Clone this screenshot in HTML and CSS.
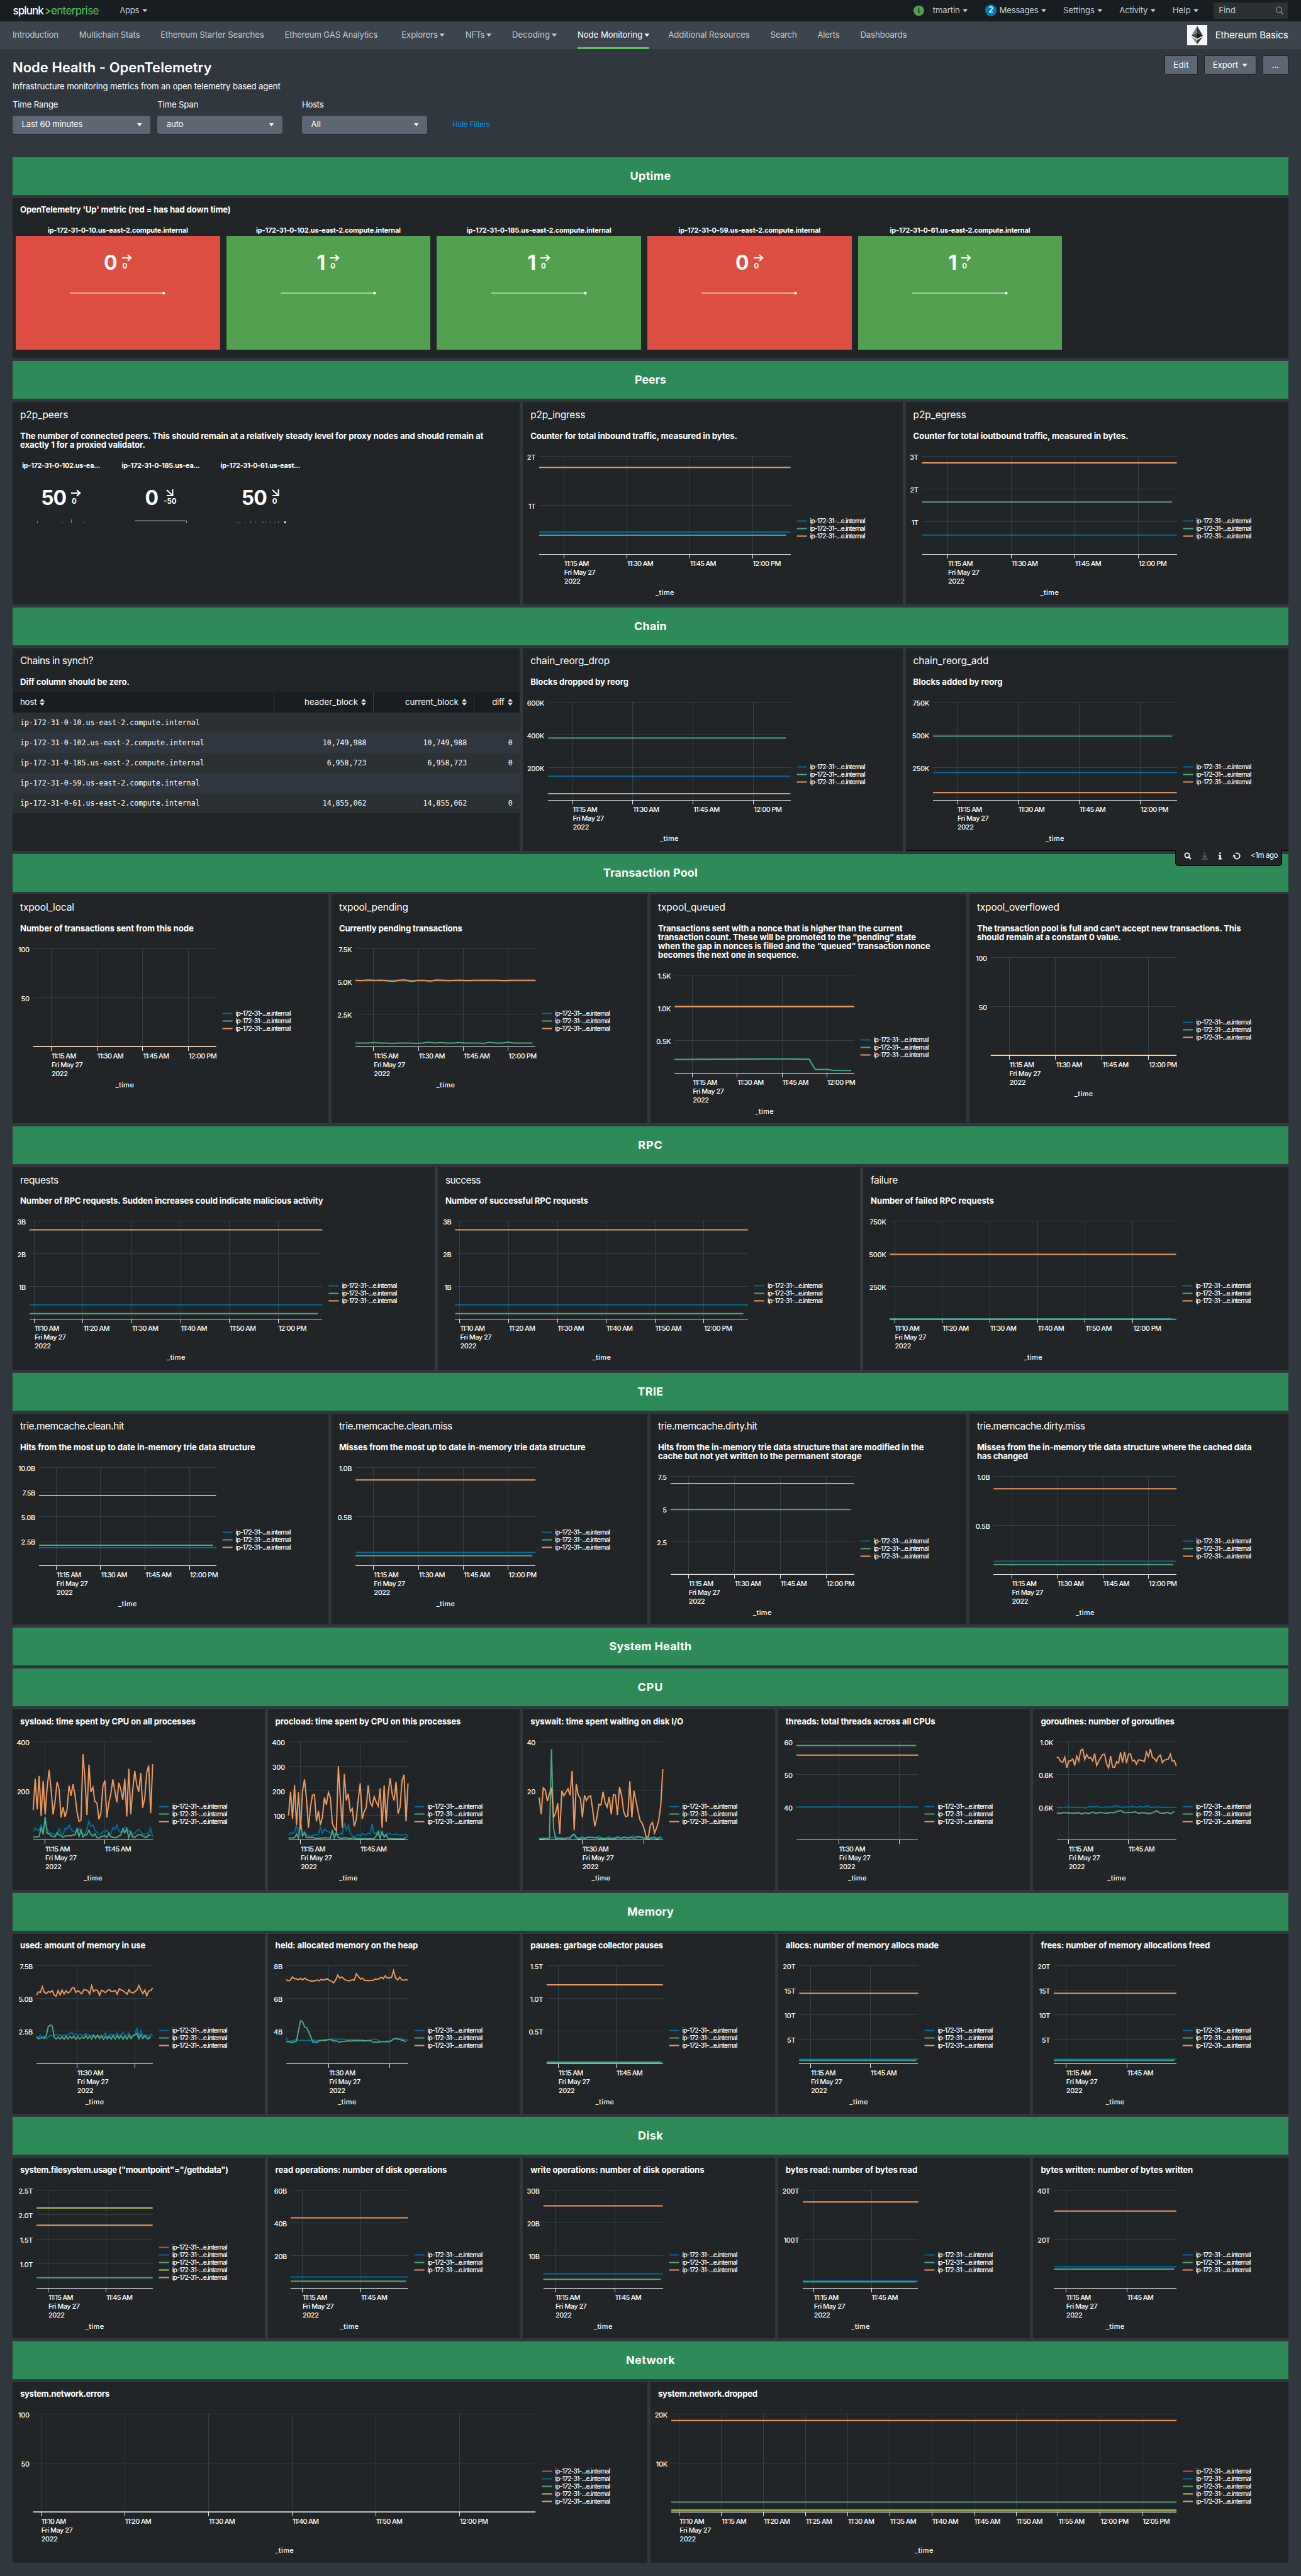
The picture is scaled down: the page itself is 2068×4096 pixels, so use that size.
FILE: index.html
```html
<!DOCTYPE html>
<html lang="en">
<head>
<meta charset="utf-8">
<title>Node Health - OpenTelemetry</title>
<link rel="stylesheet" href="styles.css">
</head>
<body>
<header class="topbar">
  <div class="logo"><span class="logo-name" data-w="48.5">splunk</span><svg class="logo-mark" width="8" height="12" viewBox="0 0 8 12"><path d="M1 1.5 L7 5.6 L1 10" fill="none" stroke="#5cc05c" stroke-width="1.8"/></svg><span class="logo-kind" data-w="76">enterprise</span></div>
  <div class="apps"><span data-w="31">Apps</span><i class="caret"></i></div>
  <div class="account">
    <span class="status">i</span>
    <span class="menu user"><span data-w="43">tmartin</span><i class="caret"></i></span>
    <span class="menu messages"><b class="count">2</b><span data-w="62">Messages</span><i class="caret"></i></span>
    <span class="menu"><span data-w="50">Settings</span><i class="caret"></i></span>
    <span class="menu"><span data-w="45">Activity</span><i class="caret"></i></span>
    <span class="menu"><span data-w="29">Help</span><i class="caret"></i></span>
    <span class="find"><span data-w="27">Find</span><svg width="14" height="14" viewBox="0 0 14 14"><circle cx="6" cy="5.5" r="4.3" fill="none" stroke="#6b7785" stroke-width="1.8"/><path d="M9 9 L12.5 12.5" stroke="#6b7785" stroke-width="2.4"/></svg></span>
  </div>
</header>
<nav class="nav">
  <div class="links">
    <span data-w="73">Introduction</span>
    <span data-w="96.5">Multichain Stats</span>
    <span data-w="164.5">Ethereum Starter Searches</span>
    <span data-w="148">Ethereum GAS Analytics</span>
    <span class="drop explorers"><span data-w="57.5">Explorers</span><i class="caret"></i></span>
    <span class="drop"><span data-w="30.5">NFTs</span><i class="caret"></i></span>
    <span class="drop"><span data-w="60">Decoding</span><i class="caret"></i></span>
    <span class="drop active"><span data-w="103.5">Node Monitoring</span><i class="caret"></i></span>
    <span class="after-active" data-w="129.5">Additional Resources</span>
    <span data-w="42">Search</span>
    <span data-w="35">Alerts</span>
    <span data-w="74">Dashboards</span>
  </div>
  <div class="app-brand">
    <svg width="32" height="32" viewBox="0 0 32 32"><rect width="32" height="32" fill="#f6f7fa"/><path d="M16 1.5 L7 16.5 L16 12.5Z" fill="#77797c"/><path d="M16 1.5 L25 16.5 L16 12.5Z" fill="#3a3c3f"/><path d="M7 16.5 L16 12.5 V21.5Z" fill="#3f4144"/><path d="M25 16.5 L16 12.5 V21.5Z" fill="#131415"/><path d="M7 18.5 L16 23.5 V30.5Z" fill="#828487"/><path d="M25 18.5 L16 23.5 V30.5Z" fill="#3a3c3f"/></svg>
    <span data-w="116">Ethereum Basics</span>
  </div>
</nav>
<main>
  <div class="page-head">
    <div>
      <h1><span data-w="317">Node Health - OpenTelemetry</span></h1>
      <p class="subtitle"><span data-w="426">Infrastructure monitoring metrics from an open telemetry based agent</span></p>
    </div>
    <div class="actions">
      <span class="btn edit"><span data-w="24.5">Edit</span></span>
      <span class="btn export"><span data-w="40.5">Export</span><i class="caret"></i></span>
      <span class="btn more"><span data-w="11">...</span></span>
    </div>
  </div>
  <div class="filters">
    <div class="field range"><label data-w="72.5">Time Range</label><div class="select"><span data-w="97">Last 60 minutes</span><i class="caret"></i></div></div>
    <div class="field span"><label data-w="65">Time Span</label><div class="select"><span data-w="27">auto</span><i class="caret"></i></div></div>
    <div class="field hosts"><label data-w="34.5">Hosts</label><div class="select"><span data-w="15.5">All</span><i class="caret"></i></div></div>
    <span class="hide"><span data-w="59.5">Hide Filters</span></span>
  </div>

  <h2 class="bar"><span data-w="65">Uptime</span></h2>
  <section class="row uptime">
    <div class="panel">
      <p class="desc"><span data-w="335">OpenTelemetry 'Up' metric (red = has had down time)</span></p>
      <div class="tiles">
        <div class="tile down"><h4><span data-w="223">ip-172-31-0-10.us-east-2.compute.internal</span></h4><div class="tile-body"><div class="value"><b>0</b><span class="trend"><svg width="16" height="12"><use href="#flat"/></svg><small>0</small></span></div><svg class="spark" width="152" height="6"><use href="#line"/></svg></div></div>
        <div class="tile up"><h4><span data-w="230">ip-172-31-0-102.us-east-2.compute.internal</span></h4><div class="tile-body"><div class="value"><b>1</b><span class="trend"><svg width="16" height="12"><use href="#flat"/></svg><small>0</small></span></div><svg class="spark" width="152" height="6"><use href="#line"/></svg></div></div>
        <div class="tile up"><h4><span data-w="230">ip-172-31-0-185.us-east-2.compute.internal</span></h4><div class="tile-body"><div class="value"><b>1</b><span class="trend"><svg width="16" height="12"><use href="#flat"/></svg><small>0</small></span></div><svg class="spark" width="152" height="6"><use href="#line"/></svg></div></div>
        <div class="tile down"><h4><span data-w="226">ip-172-31-0-59.us-east-2.compute.internal</span></h4><div class="tile-body"><div class="value"><b>0</b><span class="trend"><svg width="16" height="12"><use href="#flat"/></svg><small>0</small></span></div><svg class="spark" width="152" height="6"><use href="#line"/></svg></div></div>
        <div class="tile up"><h4><span data-w="223">ip-172-31-0-61.us-east-2.compute.internal</span></h4><div class="tile-body"><div class="value"><b>1</b><span class="trend"><svg width="16" height="12"><use href="#flat"/></svg><small>0</small></span></div><svg class="spark" width="152" height="6"><use href="#line"/></svg></div></div>
      </div>
    </div>
  </section>

  <h2 class="bar"><span data-w="50">Peers</span></h2>
  <section class="row wide-first">
    <div class="panel">
      <h3><span data-w="76.5">p2p_peers</span></h3>
      <p class="desc"><span data-w="737">The number of connected peers. This should remain at a relatively steady level for proxy nodes and should remain at</span><br><span data-w="199">exactly 1 for a proxied validator.</span></p>
      <div class="peers">
        <div class="peer"><h4><span data-w="124">ip-172-31-0-102.us-ea...</span></h4><div class="value"><b>50</b><span class="trend"><svg width="16" height="12"><use href="#flat"/></svg><small>0</small></span></div><svg class="spark" width="84" height="6"><path d="M4.5 3V6M44 4V6M58.500 0V6M78 4V6" stroke="#8d9093"/></svg></div>
        <div class="peer"><h4><span data-w="124">ip-172-31-0-185.us-ea...</span></h4><div class="value"><b>0</b><span class="trend mid"><svg width="12" height="12"><use href="#fall"/></svg><small>-50</small></span></div><svg class="spark" width="84" height="6"><path d="M0 2H82.500V6" fill="none" stroke="#a0a3a5"/></svg></div>
        <div class="peer"><h4><span data-w="126.5">ip-172-31-0-61.us-east...</span></h4><div class="value"><b>50</b><span class="trend"><svg width="12" height="12"><use href="#fall"/></svg><small>0</small></span></div><svg class="spark" width="84" height="6"><path d="M4 4V6M8 4V6M18 4V6M27 2V6M34 3V6M46 3V6M50 4V6M58 3V6M65 4V6M71 2V6" stroke="#7c8083"/><path d="M80 3h2.500V6h-2.500z" fill="#fff"/></svg></div>
      </div>
    </div>
    <div class="panel"><h3><span data-w="87">p2p_ingress</span></h3><p class="desc"><span data-w="329">Counter for total inbound traffic, measured in bytes.</span></p><svg class="chart" data-chart="ingress"></svg></div>
    <div class="panel"><h3><span data-w="84">p2p_egress</span></h3><p class="desc"><span data-w="342">Counter for total ioutbound traffic, measured in bytes.</span></p><svg class="chart" data-chart="egress"></svg></div>
  </section>

  <h2 class="bar"><span data-w="52">Chain</span></h2>
  <section class="row wide-first">
    <div class="panel">
      <h3><span data-w="116">Chains in synch?</span></h3>
      <p class="desc"><span data-w="174">Diff column should be zero.</span></p>
      <table>
        <colgroup><col class="c-host"><col class="c-head"><col class="c-cur"><col></colgroup>
        <thead><tr>
          <th><span data-w="26.5">host</span><svg class="sort" width="8" height="11"><use href="#sort"/></svg></th>
          <th><span data-w="85">header_block</span><svg class="sort" width="8" height="11"><use href="#sort"/></svg></th>
          <th><span data-w="85">current_block</span><svg class="sort" width="8" height="11"><use href="#sort"/></svg></th>
          <th><span data-w="19.5">diff</span><svg class="sort" width="8" height="11"><use href="#sort"/></svg></th>
        </tr></thead>
        <tbody>
          <tr><td>ip-172-31-0-10.us-east-2.compute.internal</td><td></td><td></td><td></td></tr>
          <tr><td>ip-172-31-0-102.us-east-2.compute.internal</td><td>10,749,988</td><td>10,749,988</td><td>0</td></tr>
          <tr><td>ip-172-31-0-185.us-east-2.compute.internal</td><td>6,958,723</td><td>6,958,723</td><td>0</td></tr>
          <tr><td>ip-172-31-0-59.us-east-2.compute.internal</td><td></td><td></td><td></td></tr>
          <tr><td>ip-172-31-0-61.us-east-2.compute.internal</td><td>14,855,062</td><td>14,855,062</td><td>0</td></tr>
        </tbody>
      </table>
    </div>
    <div class="panel"><h3><span data-w="126">chain_reorg_drop</span></h3><p class="desc"><span data-w="156">Blocks dropped by reorg</span></p><svg class="chart" data-chart="reorgDrop"></svg></div>
    <div class="panel hovered"><h3><span data-w="120">chain_reorg_add</span></h3><p class="desc"><span data-w="142">Blocks added by reorg</span></p><svg class="chart" data-chart="reorgAdd"></svg>
      <div class="tools">
        <svg width="12" height="12" viewBox="0 0 12 12"><circle cx="5" cy="5" r="3.6" fill="none" stroke="#fff" stroke-width="1.8"/><path d="M7.600 7.600 L11 11" stroke="#fff" stroke-width="2.200"/></svg>
        <svg width="10" height="12" viewBox="0 0 10 12"><path d="M5 0V8M2 5.500L5 8.500L8 5.500M0 11H10" fill="none" stroke="#5c6773" stroke-width="1.400"/></svg>
        <svg width="7" height="12" viewBox="0 0 7 12"><path d="M2.200 0.500h2.600v2.200H2.200zM0.800 4.300h4V9.800h1.400V11.500H.8V9.800h1.400V6H.8z" fill="#fff"/></svg>
        <svg width="13" height="12" viewBox="0 0 13 12"><path d="M2.600 6.500A4.600 4.600 0 1 0 5 2" fill="none" stroke="#fff" stroke-width="1.700"/><path d="M0 6.800H5.400L2.700 3.600z" fill="#fff"/></svg>
        <span data-w="43">&lt;1m ago</span>
      </div>
    </div>
  </section>

  <h2 class="bar"><span data-w="150.5">Transaction Pool</span></h2>
  <section class="row quarters txpool">
    <div class="panel"><h3><span data-w="86">txpool_local</span></h3><p class="desc"><span data-w="276">Number of transactions sent from this node</span></p><svg class="chart" data-chart="txLocal"></svg></div>
    <div class="panel"><h3><span data-w="110">txpool_pending</span></h3><p class="desc"><span data-w="196">Currently pending transactions</span></p><svg class="chart" data-chart="txPending"></svg></div>
    <div class="panel"><h3><span data-w="107">txpool_queued</span></h3><p class="desc"><span data-w="389">Transactions sent with a nonce that is higher than the current</span><br><span data-w="410.5">transaction count. These will be promoted to the “pending” state</span><br><span data-w="433">when the gap in nonces is filled and the “queued” transaction nonce</span><br><span data-w="224">becomes the next one in sequence.</span></p><svg class="chart" data-chart="txQueued"></svg></div>
    <div class="panel"><h3><span data-w="131">txpool_overflowed</span></h3><p class="desc"><span data-w="420">The transaction pool is full and can't accept new transactions. This</span><br><span data-w="229">should remain at a constant 0 value.</span></p><svg class="chart" data-chart="txOver"></svg></div>
  </section>

  <h2 class="bar"><span data-w="39.5">RPC</span></h2>
  <section class="row thirds">
    <div class="panel"><h3><span data-w="61">requests</span></h3><p class="desc"><span data-w="482">Number of RPC requests. Sudden increases could indicate malicious activity</span></p><svg class="chart" data-chart="rpcRequests"></svg></div>
    <div class="panel"><h3><span data-w="56">success</span></h3><p class="desc"><span data-w="227">Number of successful RPC requests</span></p><svg class="chart" data-chart="rpcSuccess"></svg></div>
    <div class="panel"><h3><span data-w="43">failure</span></h3><p class="desc"><span data-w="196">Number of failed RPC requests</span></p><svg class="chart" data-chart="rpcFailure"></svg></div>
  </section>

  <h2 class="bar"><span data-w="41">TRIE</span></h2>
  <section class="row quarters trie">
    <div class="panel"><h3><span data-w="165">trie.memcache.clean.hit</span></h3><p class="desc"><span data-w="374">Hits from the most up to date in-memory trie data structure</span></p><svg class="chart" data-chart="cleanHit"></svg></div>
    <div class="panel"><h3><span data-w="180">trie.memcache.clean.miss</span></h3><p class="desc"><span data-w="392">Misses from the most up to date in-memory trie data structure</span></p><svg class="chart" data-chart="cleanMiss"></svg></div>
    <div class="panel"><h3><span data-w="157.5">trie.memcache.dirty.hit</span></h3><p class="desc"><span data-w="423">Hits from the in-memory trie data structure that are modified in the</span><br><span data-w="324">cache but not yet written to the permanent storage</span></p><svg class="chart" data-chart="dirtyHit"></svg></div>
    <div class="panel"><h3><span data-w="171.5">trie.memcache.dirty.miss</span></h3><p class="desc"><span data-w="437">Misses from the in-memory trie data structure where the cached data</span><br><span data-w="81">has changed</span></p><svg class="chart" data-chart="dirtyMiss"></svg></div>
  </section>

  <h2 class="bar"><span data-w="131">System Health</span></h2>
  <h2 class="bar"><span data-w="41">CPU</span></h2>
  <section class="row fifths">
    <div class="panel"><p class="desc"><span data-w="279">sysload: time spent by CPU on all processes</span></p><svg class="chart" data-chart="sysload"></svg></div>
    <div class="panel"><p class="desc"><span data-w="295">procload: time spent by CPU on this processes</span></p><svg class="chart" data-chart="procload"></svg></div>
    <div class="panel"><p class="desc"><span data-w="243">syswait: time spent waiting on disk I/O</span></p><svg class="chart" data-chart="syswait"></svg></div>
    <div class="panel"><p class="desc"><span data-w="238">threads: total threads across all CPUs</span></p><svg class="chart" data-chart="threads"></svg></div>
    <div class="panel"><p class="desc"><span data-w="212.5">goroutines: number of goroutines</span></p><svg class="chart" data-chart="goroutines"></svg></div>
  </section>

  <h2 class="bar"><span data-w="74">Memory</span></h2>
  <section class="row fifths">
    <div class="panel"><p class="desc"><span data-w="199.5">used: amount of memory in use</span></p><svg class="chart" data-chart="used"></svg></div>
    <div class="panel"><p class="desc"><span data-w="227">held: allocated memory on the heap</span></p><svg class="chart" data-chart="held"></svg></div>
    <div class="panel"><p class="desc"><span data-w="211">pauses: garbage collector pauses</span></p><svg class="chart" data-chart="pauses"></svg></div>
    <div class="panel"><p class="desc"><span data-w="243.500">allocs: number of memory allocs made</span></p><svg class="chart" data-chart="allocs"></svg></div>
    <div class="panel"><p class="desc"><span data-w="269">frees: number of memory allocations freed</span></p><svg class="chart" data-chart="frees"></svg></div>
  </section>

  <h2 class="bar"><span data-w="40">Disk</span></h2>
  <section class="row fifths">
    <div class="panel"><p class="desc"><span data-w="331">system.filesystem.usage ("mountpoint"="/gethdata")</span></p><svg class="chart" data-chart="fsUsage"></svg></div>
    <div class="panel"><p class="desc"><span data-w="273">read operations: number of disk operations</span></p><svg class="chart" data-chart="readOps"></svg></div>
    <div class="panel"><p class="desc"><span data-w="276.500">write operations: number of disk operations</span></p><svg class="chart" data-chart="writeOps"></svg></div>
    <div class="panel"><p class="desc"><span data-w="209.500">bytes read: number of bytes read</span></p><svg class="chart" data-chart="bytesRead"></svg></div>
    <div class="panel"><p class="desc"><span data-w="242">bytes written: number of bytes written</span></p><svg class="chart" data-chart="bytesWritten"></svg></div>
  </section>

  <h2 class="bar"><span data-w="78">Network</span></h2>
  <section class="row halves">
    <div class="panel"><p class="desc"><span data-w="142">system.network.errors</span></p><svg class="chart" data-chart="netErrors"></svg></div>
    <div class="panel"><p class="desc"><span data-w="158">system.network.dropped</span></p><svg class="chart" data-chart="netDropped"></svg></div>
  </section>
</main>
<svg class="defs" width="0" height="0">
  <defs>
    <g id="flat"><path d="M0 6H14M9 1.200L14.200 6L9 10.800" fill="none" stroke="#fff" stroke-width="2.200"/></g>
    <g id="fall"><path d="M1 1L10 9.600M10.500 0V10H1" fill="none" stroke="#fff" stroke-width="2"/></g>
    <g id="line"><path d="M0 3H149" stroke="#fff" stroke-opacity=".5" stroke-width="2"/><circle cx="149.500" cy="3" r="2.300" fill="#fff"/></g>
    <g id="sort"><path d="M0 4.500L4 0L8 4.500zM0 6.500H8L4 11z" fill="#e6e9ec"/></g>
  </defs>
</svg>
<script src="charts.js"></script>
</body>
</html>
```
FILE: styles.css
```css
* { box-sizing: border-box; }
html { background: #31373e; }
body {
  margin: 0;
  width: 2070px;
  zoom: 0.99903;
  background: #31373e;
  color: #fff;
  font: 13.2px/18px Inter, "Liberation Sans", sans-serif;
  white-space: nowrap;
}
h1, h2, h3, h4, p { margin: 0; }
[data-w] { display: inline-block; }
.defs { position: absolute; }
.caret { flex: none; width: 8px; height: 5px; background: currentColor; clip-path: polygon(0 0, 100% 0, 50% 100%); }

/* top bar */
.topbar { display: flex; align-items: center; height: 34px; padding: 0 21px 0 20.5px; background: #171d21; color: #c3cbd4; }
.logo { display: flex; align-items: center; width: 170px; font-size: 17px; }
.logo-name { color: #fff; font-weight: 500; }
.logo-mark { margin: 2px 1px 0 3px; }
.logo-kind { color: #5cc05c; }
.apps { display: flex; align-items: center; gap: 5px; }
.account { display: flex; align-items: center; margin-left: auto; }
.status { width: 16.5px; height: 16.5px; border-radius: 50%; background: #53a051; color: #171d21; font: bold 12px/16.5px "Liberation Serif", serif; text-align: center; }
.menu { display: flex; align-items: center; gap: 4.5px; margin-left: 27px; }
.user { margin-left: 14px; }
.messages { margin-left: 28px; }
.count { width: 18px; height: 19px; border-radius: 9px; background: #007abd; color: #fff; font-size: 12.5px; font-weight: 600; line-height: 19px; text-align: center; }
.find { display: flex; align-items: center; justify-content: space-between; width: 118px; height: 26px; margin-left: 24px; padding: 0 6px 0 8px; border-radius: 2px; background: #2b3033; }

/* app navigation */
.nav { display: flex; justify-content: space-between; height: 44px; padding: 0 20.5px 0 20px; background: #3c444d; color: #c3cbd4; }
.links { display: flex; gap: 33px; line-height: 44px; }
.drop { display: flex; align-items: center; gap: 3px; }
.explorers { margin-left: 5px; }
.active { box-shadow: inset 0 -3px #5cc05c; color: #fff; }
.after-active { margin-left: -3px; }
.app-brand { display: flex; align-items: center; gap: 12.5px; font-size: 15px; color: #fff; }

/* title and filters */
main { padding: 0 20px 20px; }
.page-head { display: flex; justify-content: space-between; height: 69.5px; }
h1 { padding-top: 14px; font-size: 22px; line-height: 32px; font-weight: 600; }
.subtitle { padding-top: 4.5px; line-height: 20px; }
.actions { display: flex; gap: 10px; margin-top: 10.5px; }
.btn { display: flex; align-items: center; justify-content: center; gap: 6.5px; height: 31px; border: 1px solid #1f2327; border-radius: 3px; background: #5c6773; }
.edit { width: 52.5px; }
.export { width: 83px; }
.more { width: 41.5px; }
.filters { display: flex; padding-top: 10.5px; height: 102.5px; }
.field label { height: 18px; }
.select { display: flex; align-items: center; justify-content: space-between; height: 29px; margin-top: 8px; padding: 0 13px 0 14.5px; border-radius: 3px; background: #5c6773; box-shadow: 0 1px 1px #1f2327; }
.range { width: 219px; }
.span { width: 198.5px; margin-left: 11.5px; }
.hosts { width: 199px; margin-left: 31.5px; }
.hide { margin: 32px 0 0 40.5px; font-size: 11.5px; color: #009ceb; }

/* section bars and panel rows */
.bar { height: 60px; margin-bottom: 5px; background: #2e8b57; font-size: 18px; line-height: 61px; font-weight: 700; text-align: center; }
.row { display: grid; height: 322px; margin-bottom: 5px; }
.row:last-child { margin-bottom: 0; }
.uptime { height: 255px; }
.txpool { height: 364px; }
.trie { height: 336px; }
.wide-first { grid-template-columns: 4fr 3fr 3fr; }
.quarters { grid-template-columns: repeat(4, 1fr); }
.thirds { grid-template-columns: repeat(3, 1fr); }
.fifths { grid-template-columns: repeat(5, 1fr); height: 287px; }
.halves { grid-template-columns: 1fr 1fr; height: 287px; }
.panel { position: relative; min-width: 0; margin-right: 5px; padding-top: 11.5px; background: #212527; }
.panel:last-child { margin-right: 0; }
h3 { height: 35px; padding-left: 12px; font-size: 15.5px; line-height: 18px; font-weight: 400; }
.desc { padding-left: 12px; line-height: 14px; font-weight: 700; }
.chart { display: block; width: 100%; height: 255px; }

/* chart parts */
.chart text { fill: #fff; font-size: 11px; font-weight: 500; }
.chart .legend { font-size: 10.3px; }
.grid { stroke: #334147; fill: none; shape-rendering: crispEdges; }
.axis { stroke: #e6eaec; fill: none; shape-rendering: crispEdges; }

/* single values */
h4 { font-size: 11px; line-height: 14px; font-weight: 700; text-align: center; }
.tiles { display: flex; gap: 10px; padding: 18.5px 0 0 5px; }
.tile { width: 325px; }
.tile h4 { height: 16px; }
.tile-body { height: 182px; padding-top: 28.5px; }
.down .tile-body { background: #dc4e41; }
.up .tile-body { background: #53a051; }
.value { display: flex; justify-content: center; gap: 8px; height: 32px; }
.value b { font-size: 32px; line-height: 30px; letter-spacing: -1px; }
.trend { display: flex; flex-direction: column; padding-top: 1px; }
.trend svg { margin-bottom: 0; }
.trend small { font-size: 11.5px; line-height: 15px; font-weight: 700; padding-left: 1px; }
.mid { align-items: center; }
.spark { display: block; margin: 28px auto 0; }
.peers { display: flex; gap: 4px; padding-top: 19px; }
.peer { width: 154.5px; }
.peer h4 { height: 14px; }
.peer .value { margin-top: 30px; }
.peer .spark { margin-top: 17px; }

/* chain table */
table { width: 100%; margin-top: 9.5px; border-collapse: collapse; table-layout: fixed; }
.c-host { width: 416px; }
.c-head { width: 158.5px; }
.c-cur { width: 160px; }
th, td { height: 32px; padding: 0 11.5px; text-align: right; }
th:first-child, td:first-child { padding-left: 12px; text-align: left; }
th { background: #171d21; font-weight: 400; }
th + th { border-left: 1px solid #334147; }
td { font: 11.6px "DejaVu Sans Mono", monospace; background: #2b3033; }
tr:nth-child(even) td { background: #2f3640; }
.sort { margin-left: 5px; vertical-align: -1px; }

/* panel hover toolbar */
.hovered { box-shadow: inset 0 -1px #000; }
.tools {
  position: absolute; right: 10px; top: 321px; z-index: 1;
  display: flex; align-items: center; gap: 16px;
  width: 170px; height: 25px; padding: 0 0 5px 13px;
  border: 1px solid #000; border-top: 0; border-radius: 0 0 5px 5px;
  background: #212527; font-size: 11.5px;
}
```
FILE: charts.js
```javascript
// Colours per host, in legend order.
const RED = '#af575a', BLUE = '#006d9c', GREEN = '#4fa484', LIME = '#b6c75a', ORANGE = '#ec9960';
const TOP = 26, HEIGHT = 156;
const three = [BLUE, GREEN, ORANGE], five = [RED, BLUE, GREEN, LIME, ORANGE];
const quarter = ['11:15 AM', '11:30 AM', '11:45 AM', '12:00 PM'];
const tens = ['11:10 AM', '11:20 AM', '11:30 AM', '11:40 AM', '11:50 AM', '12:00 PM'];
const fives = ['11:10 AM', '11:15 AM', '11:20 AM', '11:25 AM', '11:30 AM', '11:35 AM', '11:40 AM', '11:45 AM', '11:50 AM', '11:55 AM', '12:00 PM', '12:05 PM'];
const half = ['11:15 AM', '11:45 AM'], late = ['11:30 AM', ''];

// x: plot left/right, t: first tick and step, d: y domain, y: [value, label],
// s: [colour, value | samples, end as a share of the width, sample scale]
const charts = {
  ingress: { x: [26, 426], t: [65.4, 100], l: quarter, d: [0, 2], y: [[1, '1T'], [2, '2T']], s: [[BLUE, .461], [GREEN, .394, .982], [ORANGE, 1.778]] },
  egress: { x: [25.7, 431], t: [66.6, 101], l: quarter, d: [0, 3], y: [[1, '1T'], [2, '2T'], [3, '3T']], s: [[BLUE, .6], [GREEN, 1.608, .982], [ORANGE, 2.808]] },
  reorgDrop: { x: [40, 426], t: [79, 96], l: quarter, d: [0, 600], y: [[200, '200K'], [400, '400K'], [600, '600K']], s: [[BLUE, 148.5], [GREEN, 382.5, .982], [ORANGE, 42]] },
  reorgAdd: { x: [43, 431], t: [81.5, 97], l: quarter, d: [0, 750], y: [[250, '250K'], [500, '500K'], [750, '750K']], s: [[BLUE, 214], [GREEN, 492, .982], [ORANGE, 60.6]] },
  txLocal: { x: [32.8, 323.9], t: [61.5, 72.7], l: quarter, d: [0, 100], y: [[50, '50'], [100, '100']], s: [[ORANGE, .6]] },
  txPending: { x: [38.2, 324.6], t: [66.9, 71.4], l: quarter, d: [0, 7.5], y: [[2.5, '2.5K'], [5, '5.0K'], [7.5, '7.5K']],
    s: [[BLUE, [198, 198, 199, 197, 199, 198, 198, 199, 198, 198, 197, 198, 193, 198, 199, 198, 198, 199, 198, 198, 198, 199, 198, 198, 198, 198, 198, 198, 198, 198], 1, 291],
        [GREEN, [12, 12, 12, 13, 12, 12, 11, 12, 12, 12, 11, 12, 14, 12, 13, 12, 12, 13, 12, 12, 12, 11, 14, 12, 12, 14, 12, 12, 12, 12], .982, 291],
        [ORANGE, [198, 197, 199, 198, 198, 197, 195, 198, 199, 195, 198, 198, 196, 199, 198, 197, 198, 198, 197, 198, 198, 198, 198, 198, 197, 198, 198, 198, 198, 198], 1, 291]] },
  txQueued: { x: [38.3, 324], t: [66.7, 71.3], l: quarter, d: [0, 1.5], y: [[.5, '0.5K'], [1, '1.0K'], [1.5, '1.5K']],
    s: [[BLUE, 1.02], [GREEN, [[0, .214], [.15, .218], [.6, .221], [.75, .218], [.783, .062], [.85, .062], [.882, .046], [.984, .044]]], [ORANGE, 1.026]] },
  txOver: { x: [33.8, 329.5], t: [63.1, 74], l: quarter, d: [0, 100], y: [[50, '50'], [100, '100']], s: [[ORANGE, .6]] },
  rpcRequests: { x: [26.9, 492.9], t: [34.5, 77.6], l: tens, d: [0, 3], y: [[1, '1B'], [2, '2B'], [3, '3B']], s: [[BLUE, .442], [GREEN, .175, .984], [ORANGE, 2.738]] },
  rpcSuccess: { x: [27.4, 493.4], t: [35, 77.6], l: tens, d: [0, 3], y: [[1, '1B'], [2, '2B'], [3, '3B']], s: [[BLUE, .442], [GREEN, .175, .984], [ORANGE, 2.738]] },
  rpcFailure: { x: [42.5, 498], t: [50.1, 75.8], l: tens, d: [0, 750], y: [[250, '250K'], [500, '500K'], [750, '750K']], s: [[BLUE, 3], [GREEN, 3, .984], [ORANGE, 497]] },
  cleanHit: { x: [42, 323.9], t: [69.4, 70.7], l: quarter, d: [0, 10], y: [[2.5, '2.5B'], [5, '5.0B'], [7.5, '7.5B'], [10, '10.0B']], s: [[BLUE, 1.87], [GREEN, 2.1, .982], [ORANGE, 7.18]] },
  cleanMiss: { x: [38.2, 324.6], t: [66.9, 71.4], l: quarter, d: [0, 1], y: [[.5, '0.5B'], [1, '1.0B']], s: [[BLUE, .1375], [GREEN, .103, .982], [ORANGE, .876]] },
  dirtyHit: { x: [31.7, 324], t: [60.4, 73], l: quarter, d: [0, 7.5], y: [[2.5, '2.5'], [5, '5'], [7.5, '7.5']], s: [[BLUE, .04], [GREEN, 4.99, .982], [ORANGE, 6.97]] },
  dirtyMiss: { x: [38.4, 329.5], t: [67.1, 72.6], l: quarter, d: [0, 1], y: [[.5, '0.5B'], [1, '1.0B']], s: [[BLUE, .1375], [GREEN, .103, .982], [ORANGE, .876]] },
  sysload: { x: [32.8, 222.9], t: [51.6, 94.8], l: half, d: [0, 400], y: [[200, '200'], [400, '400']], s: [
    [BLUE, [29, 41, 33, 34, 51, 26, 66, 36, 26, 23, 21, 17, 19, 38, 21, 19, 39, 36, 51, 36, 29, 27, 26, 39, 29, 21, 19, 36, 65, 46, 51, 33, 26, 21, 19, 29, 27, 33, 23, 21, 41, 36, 51, 31, 26, 28, 43, 41, 31, 23, 21, 23, 31, 36, 28, 21, 19, 21, 23, 39, 11], 1, 330],
    [GREEN, [11, 11, 11, 12, 43, 19, 78, 23, 21, 14, 12, 11, 25, 17, 14, 9, 14, 14, 15, 14, 18, 17, 38, 12, 34, 10, 17, 18, 33, 20, 13, 21, 8, 7, 11, 13, 15, 9, 23, 12, 9, 8, 9, 14, 16, 38, 24, 38, 8, 28, 10, 9, 15, 18, 18, 14, 10, 9, 17, 16], .983, 330],
    [ORANGE, [101, 206, 103, 216, 81, 199, 86, 176, 236, 171, 86, 131, 196, 171, 76, 111, 78, 101, 183, 149, 188, 151, 96, 63, 66, 289, 206, 84, 254, 163, 178, 129, 126, 70, 91, 181, 201, 76, 126, 156, 204, 166, 127, 193, 171, 136, 206, 79, 240, 88, 171, 233, 186, 163, 226, 109, 141, 226, 251, 90, 256], 1, 330]] },
  procload: { x: [32.7, 222.8], t: [51.6, 95], l: half, d: [0, 400], y: [[100, '100'], [200, '200'], [300, '300'], [400, '400']], s: [
    [BLUE, [18, 25, 22, 27, 52, 22, 60, 18, 28, 18, 14, 12, 15, 18, 17, 20, 44, 22, 36, 31, 28, 24, 20, 21, 18, 19, 22, 20, 57, 35, 50, 24, 15, 10, 15, 20, 12, 22, 18, 17, 24, 20, 55, 20, 26, 16, 30, 20, 15, 20, 22, 21, 18, 19, 21, 18, 17, 17, 18, 20, 10], 1, 330],
    [GREEN, [6, 7, 7, 8, 20, 6, 64, 14, 25, 8, 8, 9, 9, 7, 6, 6, 7, 6, 8, 7, 7, 6, 34, 6, 26, 9, 6, 6, 8, 7, 6, 6, 7, 7, 5, 5, 5, 4, 6, 5, 5, 5, 5, 5, 14, 28, 6, 28, 10, 18, 5, 5, 5, 4, 5, 4, 5, 4, 4, 10], .983, 330],
    [ORANGE, [83, 163, 71, 186, 51, 161, 36, 164, 204, 139, 41, 111, 151, 153, 63, 98, 51, 78, 143, 119, 161, 143, 56, 41, 31, 249, 141, 41, 223, 133, 156, 96, 106, 46, 69, 136, 191, 71, 96, 109, 184, 126, 114, 146, 128, 114, 174, 41, 184, 61, 156, 209, 156, 133, 196, 89, 111, 201, 220, 63, 191], 1, 330]] },
  syswait: { x: [26, 222.8], t: [94.4, 98], l: late, d: [0, 40], y: [[20, '20'], [40, '40']], s: [
    [BLUE, [6, 5, 8, 6, 5, 7, 9, 8, 12, 8, 7, 8, 6, 7, 8, 9, 18, 14, 6, 8, 9, 12, 7, 6, 9, 8, 10, 8, 7, 13, 9, 6, 3, 7, 12, 6, 7, 9, 12, 10, 6, 8, 10, 8, 9, 13, 14, 11, 9, 12, 10, 7, 6, 5, 9, 7, 5, 8, 9, 12, 4], 1, 330],
    [GREEN, [5, 4, 3, 6, 5, 6, 306, 40, 4, 6, 6, 5, 5, 6, 8, 6, 16, 20, 10, 4, 4, 8, 5, 8, 10, 9, 8, 7, 9, 5, 6, 5, 6, 7, 5, 5, 6, 5, 9, 7, 6, 10, 8, 6, 8, 9, 6, 8, 12, 10, 8, 6, 5, 4, 6, 8, 10, 3, 6, 8], .983, 330],
    [ORANGE, [143, 88, 176, 168, 131, 156, 176, 76, 91, 124, 21, 166, 149, 161, 173, 151, 233, 33, 189, 151, 141, 76, 151, 133, 146, 149, 101, 46, 76, 121, 119, 163, 126, 111, 146, 86, 153, 151, 84, 179, 151, 96, 79, 81, 198, 76, 166, 131, 96, 66, 56, 36, 9, 11, 51, 59, 24, 41, 66, 116, 239], 1, 330]] },
  threads: { x: [28.7, 222.7], t: [96.3, 96.7], l: late, d: [30, 60], y: [[40, '40'], [50, '50'], [60, '60']], s: [[BLUE, 40.1], [GREEN, 58.95, .983], [ORANGE, 56]] },
  goroutines: { x: [37.9, 228], t: [56.3, 95.1], l: half, d: [.4, 1], y: [[.6, '0.6K'], [.8, '0.8K'], [1, '1.0K']], s: [
    [BLUE, [111, 109, 110, 112, 109, 111, 110, 110, 108, 113, 111, 114, 110, 111, 112, 110, 116, 113, 110, 112, 111, 114, 110, 113, 111, 115, 110, 111, 112, 110, 111, 110, 110, 111], 1, 330],
    [GREEN, [91, 90, 93, 91, 91, 90, 92, 88, 92, 89, 94, 90, 93, 92, 90, 93, 92, 97, 99, 92, 93, 93, 95, 90, 92, 91, 89, 92, 99, 91, 90, 93, 89, 96], .983, 330],
    [ORANGE, [280, 276, 264, 262, 279, 244, 266, 267, 273, 251, 283, 266, 301, 306, 271, 288, 276, 278, 266, 291, 251, 266, 276, 288, 289, 256, 243, 283, 246, 245, 264, 259, 295, 261, 297, 259, 289, 290, 266, 269, 256, 270, 269, 268, 264, 296, 281, 306, 278, 275, 265, 281, 286, 261, 269, 271, 273, 289, 266, 268, 249], 1, 330]] },
  used: { x: [38, 222.9], t: [102.4, 92.1], l: late, d: [0, 7.5], y: [[2.5, '2.5B'], [5, '5.0B'], [7.5, '7.5B']], s: [
    [BLUE, [94, 90, 98, 90, 93, 85, 90, 98, 95, 96, 100, 97, 98, 94, 98, 97, 99, 103, 105, 98, 102, 96, 100, 96, 97, 102, 96, 99, 94, 98, 92, 98, 92, 97, 93, 104, 90, 97, 100, 92, 98, 104, 90, 100, 106, 92, 98, 104, 90, 95, 100, 120, 90, 113, 96, 90, 98, 88, 100, 94], 1, 330],
    [GREEN, [90, 85, 87, 89, 86, 96, 125, 131, 128, 90, 84, 91, 84, 92, 83, 94, 84, 93, 86, 94, 83, 92, 84, 90, 86, 95, 85, 93, 84, 97, 86, 97, 85, 94, 83, 92, 85, 93, 84, 96, 84, 95, 85, 96, 83, 94, 84, 97, 85, 95, 98, 103, 85, 98, 86, 96, 86, 84, 92], .983, 330],
    [ORANGE, [232, 243, 241, 260, 241, 237, 244, 241, 247, 232, 228, 247, 232, 249, 235, 247, 239, 243, 255, 257, 241, 247, 242, 236, 250, 249, 247, 236, 263, 244, 249, 248, 231, 248, 245, 240, 247, 250, 244, 245, 247, 235, 253, 249, 246, 241, 235, 250, 241, 239, 244, 249, 264, 249, 237, 249, 229, 246, 247, 256], 1, 330]] },
  held: { x: [28.8, 222.8], t: [96.8, 96.7], l: late, d: [2, 8], y: [[4, '4B'], [6, '6B'], [8, '8B']], s: [
    [BLUE, [88, 76, 77, 78, 80, 82, 80, 79, 80, 79, 79, 80, 79, 80, 80, 79, 80, 80, 81, 82, 82, 84, 83, 84, 84, 84, 84, 83, 83, 82, 81, 82, 82, 81, 82, 82, 79, 76, 77, 78, 80, 81, 82, 84, 82, 77, 75, 75, 74, 74, 74, 78, 84, 85, 87, 86, 85, 82, 82, 78], 1, 330],
    [GREEN, [75, 75, 74, 72, 74, 77, 112, 145, 142, 124, 122, 107, 90, 73, 74, 72, 78, 79, 80, 79, 81, 82, 81, 77, 78, 76, 73, 76, 76, 77, 78, 77, 78, 78, 79, 78, 79, 80, 77, 79, 78, 78, 74, 73, 73, 74, 75, 76, 75, 77, 76, 79, 84, 86, 84, 82, 80, 78, 75], .983, 330],
    [ORANGE, [284, 280, 282, 293, 287, 286, 284, 288, 283, 289, 284, 281, 279, 279, 280, 283, 280, 285, 282, 285, 286, 282, 278, 273, 283, 299, 289, 293, 286, 282, 280, 280, 284, 282, 303, 294, 286, 289, 281, 281, 280, 281, 281, 286, 285, 287, 292, 287, 297, 289, 290, 291, 314, 289, 283, 292, 283, 282, 284, 282], 1, 330]] },
  pauses: { x: [38, 222.8], t: [56.4, 92.1], l: half, d: [0, 1.5], y: [[.5, '0.5T'], [1, '1.0T'], [1.5, '1.5T']], s: [[BLUE, .032], [GREEN, .024, .983], [ORANGE, 1.211]] },
  allocs: { x: [33.3, 222.7], t: [51.5, 95], l: half, d: [0, 20], y: [[5, '5T'], [10, '10T'], [15, '15T'], [20, '20T']], s: [[BLUE, .97], [GREEN, .73, .983], [ORANGE, 14.42]] },
  frees: { x: [33.2, 228], t: [52.4, 97], l: half, d: [0, 20], y: [[5, '5T'], [10, '10T'], [15, '15T'], [20, '20T']], s: [[BLUE, .97], [GREEN, .73, .983], [ORANGE, 14.42]] },
  fsUsage: { hosts: five, x: [38, 222.9], t: [56.6, 92], l: half, d: [.5, 2.5], y: [[1, '1.0T'], [1.5, '1.5T'], [2, '2.0T'], [2.5, '2.5T']], s: [[GREEN, .72], [LIME, 2.145], [ORANGE, 1.79]] },
  readOps: { x: [36, 222.8], t: [54.5, 93.1], l: half, d: [0, 60], y: [[20, '20B'], [40, '40B'], [60, '60B']], s: [[BLUE, 7.07], [GREEN, 4.5, .983], [ORANGE, 43.2]] },
  writeOps: { x: [32.7, 222.8], t: [51.5, 95], l: half, d: [0, 30], y: [[10, '10B'], [20, '20B'], [30, '30B']], s: [[BLUE, 4.5], [GREEN, 2.8, .983], [ORANGE, 25.3]] },
  bytesRead: { x: [39.2, 222.7], t: [56.4, 91.8], l: half, d: [0, 200], y: [[100, '100T'], [200, '200T']], s: [[BLUE, 15.5], [GREEN, 13.7, .983], [ORANGE, 176.7]] },
  bytesWritten: { x: [33.2, 228], t: [52.4, 97], l: half, d: [0, 40], y: [[20, '20T'], [40, '40T']], s: [[BLUE, 8.9], [GREEN, 7.94, .983], [ORANGE, 31.6]] },
  netErrors: { hosts: five, x: [32.8, 832.1], t: [45.3, 133.2], l: tens, d: [0, 100], y: [[50, '50'], [100, '100']], s: [[ORANGE, .6]] },
  netDropped: { hosts: five, x: [33, 837], t: [45.9, 66.96], l: fives, d: [0, 20], y: [[10, '10K'], [20, '20K']], s: [[RED, .15], [BLUE, .54], [GREEN, 2.1], [LIME, .42], [ORANGE, 18.75]] }
};

function timeWidth(s) {
  if (s[1] === '2') return s[4] === '5' ? 43.5 : 45;
  return s[3] === '1' ? 39.5 : 42;
}

function label(s, x, y, w) {
  return `<text x="${x}" y="${y}" textLength="${w}">${s}</text>`;
}

function draw(c) {
  const [x0, x1] = c.x, w = x1 - x0, bottom = TOP + HEIGHT;
  const yOf = v => bottom - (v - c.d[0]) / (c.d[1] - c.d[0]) * HEIGHT;
  let out = '', grid = '', axis = `M${x0} ${bottom}H${x1}`;
  c.y.forEach(([v]) => { grid += `M${x0} ${yOf(v)}H${x1}`; });
  c.l.forEach((_, i) => {
    const x = c.t[0] + i * c.t[1];
    grid += `M${x} ${TOP}V${bottom}`;
    axis += `M${x} ${bottom}V${bottom + 6}`;
  });
  out += `<path class="grid" d="${grid}"/>`;
  c.s.forEach(([color, data, end = 1, scale]) => {
    let points;
    if (typeof data === 'number') points = [[x0, yOf(data)], [x0 + w * end, yOf(data)]];
    else if (scale) points = data.map((v, i) => [x0 + w * end * i / (data.length - 1), bottom - v / scale * HEIGHT]);
    else points = data.map(([f, v]) => [x0 + w * f, yOf(v)]);
    out += `<polyline fill="none" stroke="${color}" stroke-width="2" points="${points.map(p => p.map(n => n.toFixed(2)).join()).join(' ')}"/>`;
  });
  out += `<path class="axis" d="${axis}"/>`;
  c.y.forEach(([v, s]) => {
    out += `<text x="${x0 - 6}" y="${yOf(v) + 4.8}" text-anchor="end" letter-spacing="-.35">${s}</text>`;
  });
  c.l.forEach((s, i) => { if (s) out += label(s, c.t[0] + i * c.t[1] + .5, bottom + 18, timeWidth(s)); });
  out += label('Fri May 27', c.t[0] + .5, bottom + 32, 50);
  out += label('2022', c.t[0] + .5, bottom + 46, 26);
  out += label('_time', (x0 + x1) / 2 - 14.7, bottom + 64, 29.5);
  const hosts = c.hosts || three;
  hosts.forEach((color, i) => {
    const y = bottom - 41.4 + (i - (hosts.length - 1) / 2) * 12;
    out += `<path d="M${x1 + 10} ${y}h16" stroke="${color}" stroke-width="2"/>`;
    out += `<text class="legend" x="${x1 + 31}" y="${y + 4}" textLength="88">ip-172-31-...e.internal</text>`;
  });
  return out;
}

document.querySelectorAll('.chart').forEach(el => { el.innerHTML = draw(charts[el.dataset.chart]); });

// Tracks each label so that it takes the width set in data-w.
const scale = document.body.getBoundingClientRect().width / 2070;
document.querySelectorAll('[data-w]').forEach(el => {
  const natural = el.getBoundingClientRect().width / scale;
  el.style.letterSpacing = ((el.dataset.w - natural) / el.textContent.length).toFixed(3) + 'px';
});
```
